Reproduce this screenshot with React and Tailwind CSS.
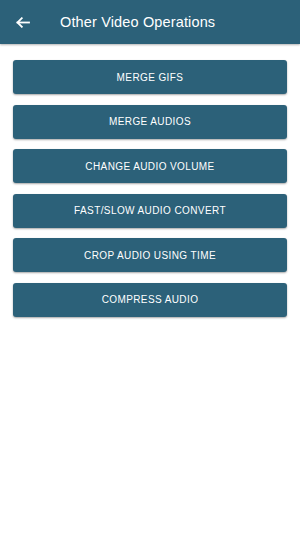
import React from "react";

const items = [
  "MERGE GIFS",
  "MERGE AUDIOS",
  "CHANGE AUDIO VOLUME",
  "FAST/SLOW AUDIO CONVERT",
  "CROP AUDIO USING TIME",
  "COMPRESS AUDIO",
];

export default function App() {
  return (
    <div className="w-[300px] h-[542px] bg-white flex flex-col" style={{ fontFamily: '"Liberation Sans", Arial, sans-serif' }}>
      <div className="h-[44px] bg-[#2c6179] flex items-center shadow-[0_1px_2px_rgba(0,0,0,0.3)] shrink-0">
        <div className="w-[60px] flex items-center pl-[16px] pt-[1px]">
          <svg width="14" height="11" viewBox="0 0 14 11" fill="none" stroke="white" strokeWidth="1.8" strokeLinecap="square">
            <path d="M13 5.5H1.5" />
            <path d="M5.8 1.2L1.5 5.5l4.3 4.3" />
          </svg>
        </div>
        <div className="text-white text-[14.5px] tracking-[0.01em] pt-[2px]">Other Video Operations</div>
      </div>
      <div className="flex flex-col gap-[10.6px] px-[13px] pt-[16px]">
        {items.map((t) => (
          <div
            key={t}
            className="h-[34px] bg-[#2c6179] rounded-[3px] shadow-[0_1px_2px_rgba(0,0,0,0.35)] flex items-center justify-center text-white text-[10px] tracking-[0.04em]"
          >
            {t}
          </div>
        ))}
      </div>
    </div>
  );
}
